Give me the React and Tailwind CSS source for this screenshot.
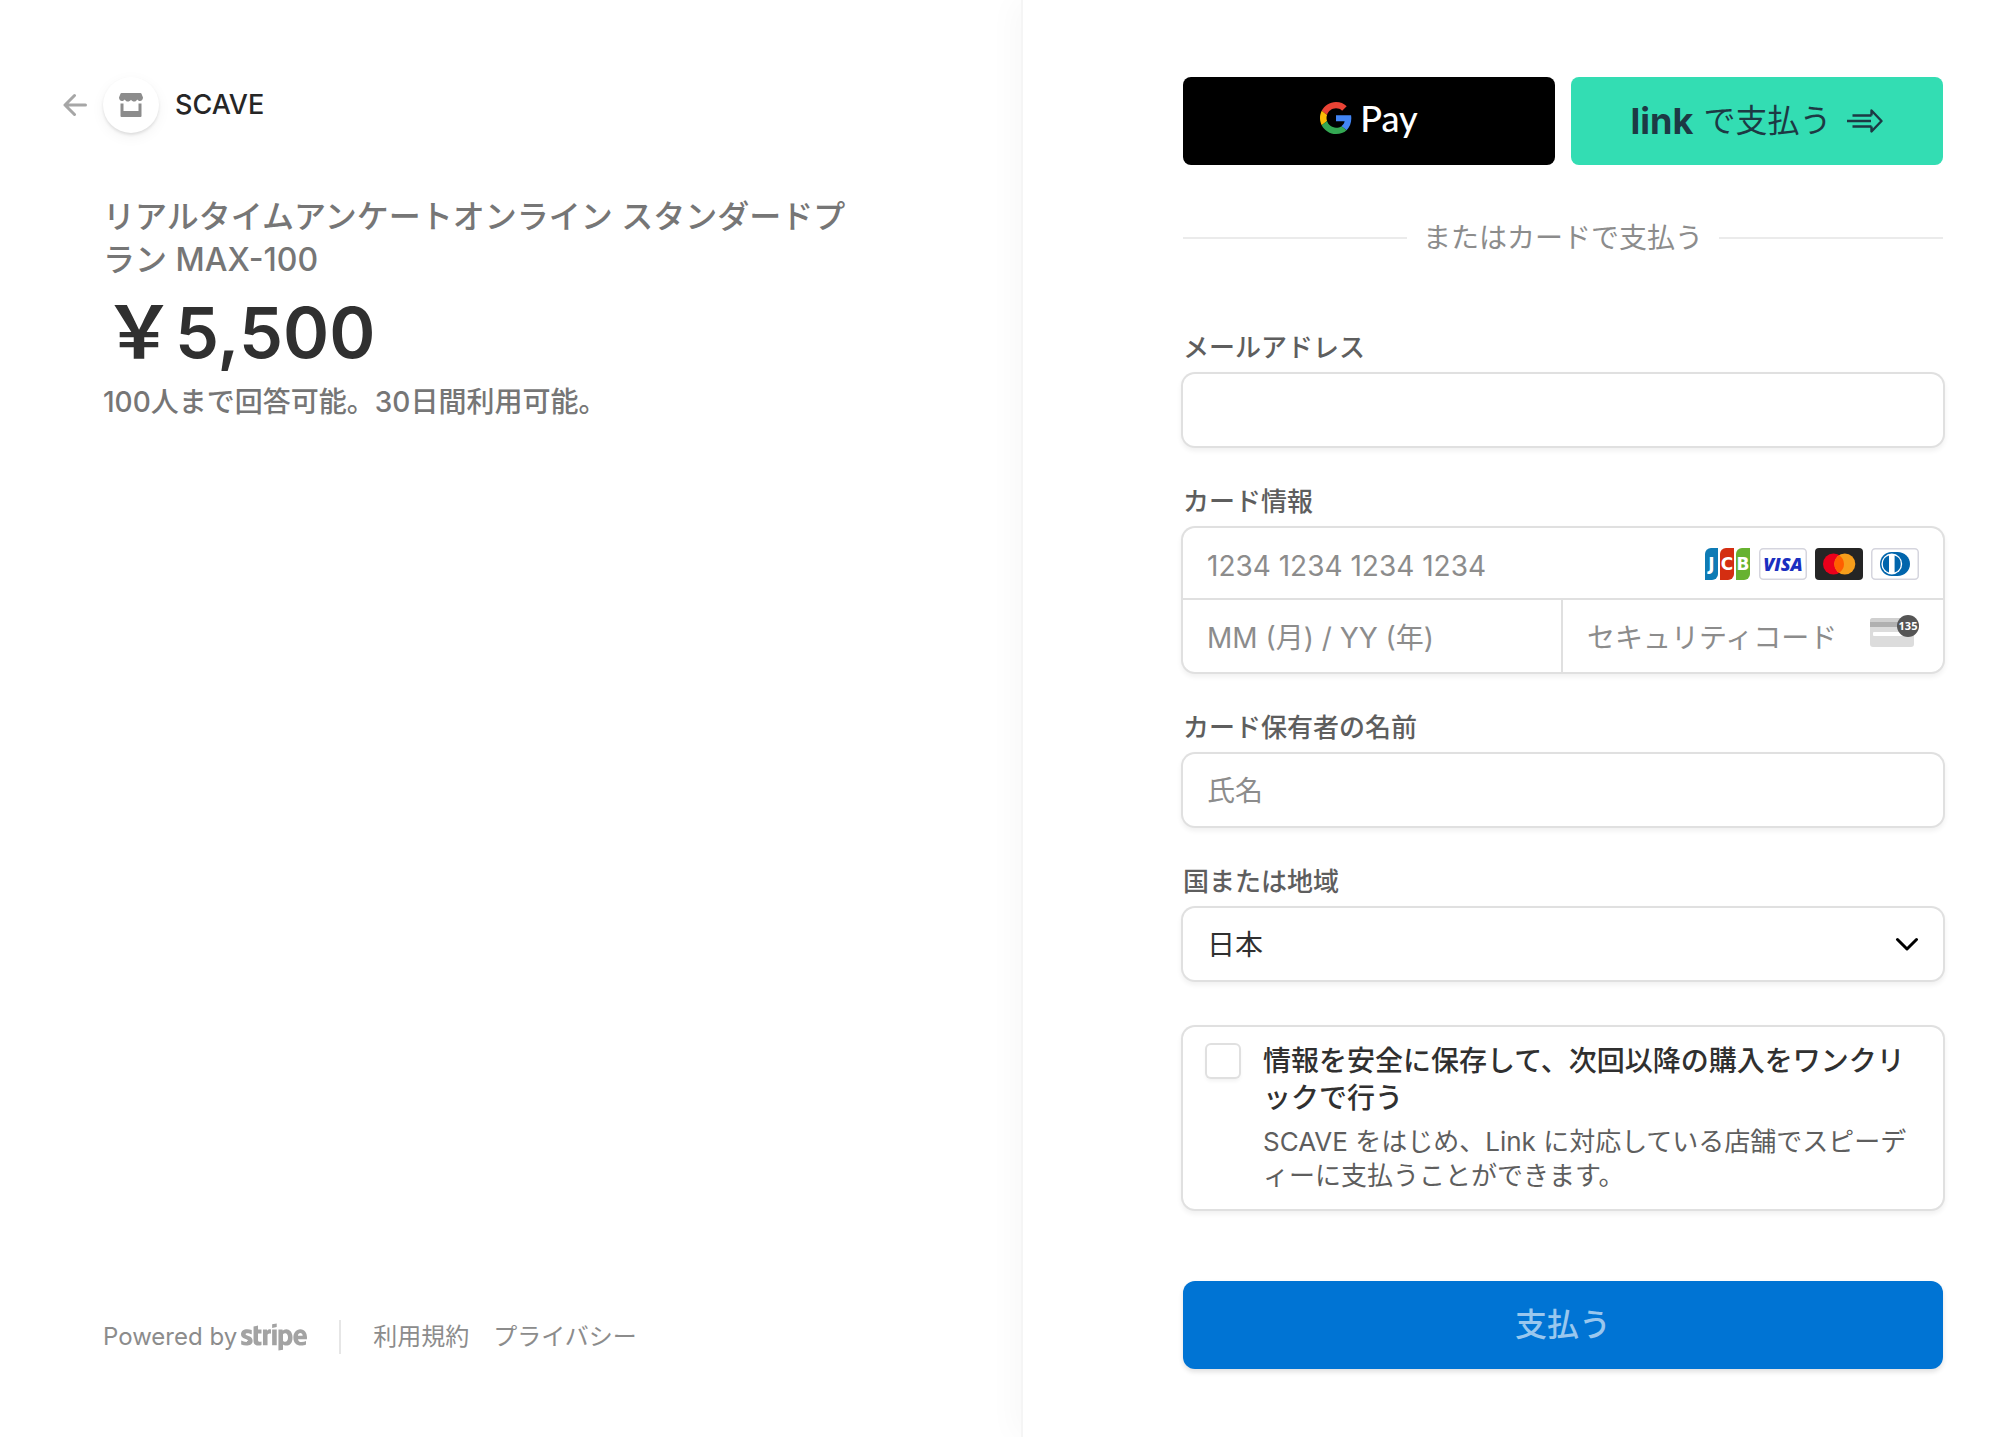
import React from "react";
import { FaStripe } from "react-icons/fa";

const field =
  "block w-full h-18 rounded-xl bg-white px-6 pt-0.5 text-[28px] text-[#303030] placeholder:text-[#8c8c8c] shadow-[0_0_0_2px_#e0e0e0,0_3px_5px_2px_rgba(0,0,0,0.06)] outline-none";

const bareInput =
  "min-w-0 flex-1 self-stretch bg-transparent pt-1 text-[28px] text-[#303030] placeholder:text-[#8c8c8c] outline-none";

function BackArrow() {
  return (
    <svg viewBox="0 0 24 24" className="w-6 h-6" fill="none" stroke="#a6a6a6" strokeWidth="3" strokeLinecap="round" strokeLinejoin="round">
      <path d="M22.5 12H2M11.500 2.500L2 12L11.500 21.500" />
    </svg>
  );
}

function StoreIcon() {
  return (
    <svg viewBox="0 0 24 24" className="w-6 h-6" fill="#8c8c8c">
      <path d="M2.500 0h19a1 1 0 0 1 .9.6L24 4.600c0 1.900-1.300 3.400-3 3.400-1.200 0-2.200-.6-2.800-1.500C17.600 7.700 16.500 8.600 15.200 8.600S12.700 7.800 12 6.700C11.300 7.800 10.100 8.600 8.800 8.600S6.400 7.700 5.800 6.500C5.200 7.400 4.200 8 3 8 1.300 8 0 6.500 0 4.600L1.600.6A1 1 0 0 1 2.500 0Z" />
      <path d="M1.500 10.500h3V18h15v-7.500h3V23a1 1 0 0 1-1 1h-19a1 1 0 0 1-1-1Z" />
    </svg>
  );
}

function GoogleG() {
  return (
    <svg viewBox="0 0 48 48" className="w-8 h-8">
      <path fill="#EA4335" d="M24 9.5c3.540 0 6.710 1.220 9.210 3.600l6.850-6.850C35.900 2.380 30.470 0 24 0 14.620 0 6.510 5.380 2.560 13.220l7.980 6.190C12.430 13.720 17.740 9.500 24 9.500z" />
      <path fill="#4285F4" d="M46.980 24.550c0-1.570-.15-3.090-.38-4.550H24v9.020h12.940c-.58 2.960-2.260 5.480-4.780 7.180l7.730 6c4.510-4.180 7.090-10.360 7.090-17.650z" />
      <path fill="#FBBC05" d="M10.530 28.590c-.48-1.450-.76-2.990-.76-4.590s.27-3.140.76-4.590l-7.980-6.190C.92 16.460 0 20.120 0 24c0 3.880.92 7.540 2.560 10.780l7.970-6.190z" />
      <path fill="#34A853" d="M24 48c6.480 0 11.930-2.130 15.890-5.810l-7.730-6c-2.150 1.450-4.920 2.300-8.160 2.300-6.260 0-11.570-4.220-13.470-9.910l-7.980 6.190C6.510 42.620 14.620 48 24 48z" />
    </svg>
  );
}

function LinkArrow() {
  return (
    <svg viewBox="0 0 36 24" className="w-9 h-6" fill="none" stroke="#1d3944" strokeWidth="2.400" strokeLinejoin="round">
      <path d="M5.500 6.500H24.500M0 12H24M5.500 17.500H24.500" />
      <path d="M24.500 6.500V1.500L34.500 12L24.500 22.500V17.500" />
    </svg>
  );
}

function JcbCard() {
  return (
    <svg viewBox="0 0 48 32" className="w-12 h-8">
      <path fill="#0e7bb5" d="M8 0h7v26a6 6 0 0 1-6 6H2V6a6 6 0 0 1 6-6Z" />
      <path fill="#d42e12" d="M23 0h8v26a6 6 0 0 1-6 6h-8V6a6 6 0 0 1 6-6Z" />
      <path fill="#67b230" d="M39 0h8v26a6 6 0 0 1-6 6h-8V6a6 6 0 0 1 6-6Z" />
      <g fill="#fff" className="font-['DejaVu_Sans']" fontWeight="700" fontSize="17" textAnchor="middle">
        <text x="8.500" y="22">J</text>
        <text x="24" y="22">C</text>
        <text x="40" y="22">B</text>
      </g>
    </svg>
  );
}

function VisaCard() {
  return (
    <svg viewBox="0 0 48 32" className="w-12 h-8">
      <rect x=".75" y=".75" width="46.500" height="30.500" rx="3.500" fill="#fff" stroke="#d5d5de" strokeWidth="1.500" />
      <text x="24" y="22.500" fill="#1a2fc0" className="font-['Open_Sans']" fontStyle="italic" fontWeight="800" fontSize="18" textAnchor="middle">
        VISA
      </text>
    </svg>
  );
}

function MastercardCard() {
  return (
    <svg viewBox="0 0 48 32" className="w-12 h-8">
      <rect width="48" height="32" rx="4" fill="#252525" />
      <circle cx="18.500" cy="16" r="10.500" fill="#eb001b" />
      <circle cx="29.800" cy="16" r="10.500" fill="#f79e1b" />
      <path fill="#ff5f00" d="M24.150 7.150a10.500 10.500 0 0 1 0 17.700a10.500 10.500 0 0 1 0-17.700Z" />
    </svg>
  );
}

function DinersCard() {
  return (
    <svg viewBox="0 0 48 32" className="w-12 h-8">
      <rect x=".75" y=".75" width="46.500" height="30.500" rx="3.500" fill="#fff" stroke="#d5d5de" strokeWidth="1.500" />
      <path fill="#0165ac" d="M20.500 4h6C33.500 4 39 9.200 39 16s-5.500 12-12.500 12h-6C14 28 9 22.800 9 16S14 4 20.500 4Z" />
      <circle cx="20.800" cy="16" r="10.400" fill="#fff" />
      <path fill="#0165ac" d="M18 7.600v16.800a8.800 8.800 0 0 1 0-16.800ZM23.600 7.600a8.800 8.800 0 0 1 0 16.800Z" />
    </svg>
  );
}

function CvcIcon() {
  return (
    <svg viewBox="0 0 50 42" className="w-[50px] h-[42px]">
      <rect x="1" y="3" width="44" height="29" rx="3" fill="#dcdcdc" />
      <path d="M4 3h38a3 3 0 0 1 3 3v6H1V6a3 3 0 0 1 3-3Z" fill="#d0d0d0" />
      <rect x="1" y="7" width="44" height="5" fill="#b0b0b0" />
      <rect x="4" y="17" width="34" height="4" rx="1" fill="#fff" />
      <circle cx="39" cy="11" r="11" fill="#555" />
      <text x="39" y="15" fill="#fff" className="font-['Noto_Sans']" fontWeight="700" fontSize="11" textAnchor="middle">
        135
      </text>
    </svg>
  );
}

function FormField({ id, label, children }) {
  return (
    <div>
      <label htmlFor={id} className="block mb-2.5 text-[26px] leading-8 font-medium text-[#5e5e5e]">
        {label}
      </label>
      {children}
    </div>
  );
}

function OrderSummary() {
  return (
    <section className="flex justify-end bg-white pl-16 pr-[158px] pt-[77px] pb-[72px]">
      <div className="flex w-full max-w-[760px] flex-col">
        <header className="-ml-10 flex items-center gap-4">
          <a href="#back" aria-label="戻る">
            <BackArrow />
          </a>
          <div className="flex h-14 w-14 items-center justify-center rounded-full bg-white shadow-[0_2px_3px_rgba(0,0,0,0.1),0_4px_14px_rgba(0,0,0,0.05)]">
            <StoreIcon />
          </div>
          <h1 className="text-[27px] font-medium text-[#262626]">SCAVE</h1>
        </header>

        <h2 className="mt-[62px] text-[32px] leading-[43px] font-medium text-[#767676]">
          リアルタイムアンケートオンライン スタンダードプラン MAX-100
        </h2>
        <p className="my-2 text-[70px] leading-[86px] font-semibold text-[#303030]">
          <span className="text-[72px]">￥</span>5,500
        </p>
        <p className="text-[28px] leading-9 font-medium text-[#767676]">
          100人まで回答可能。30日間利用可能。
        </p>

        <footer className="mt-auto flex items-center text-2xl text-[#8c8c8c]">
          <a href="#stripe" className="flex items-center gap-1">
            Powered by
            <FaStripe className="h-14 w-[66px] text-[#a3a3a3]" aria-label="Stripe" />
          </a>
          <div className="mx-8 h-8.5 w-0.5 bg-[#e6e6e6]" />
          <nav className="flex gap-6">
            <a href="#terms">利用規約</a>
            <a href="#privacy">プライバシー</a>
          </nav>
        </footer>
      </div>
    </section>
  );
}

function PaymentForm() {
  return (
    <section className="border-l-2 border-[#f5f5f5] bg-white pl-40 pr-16 pt-[77px] pb-[68px] shadow-[-6px_0_30px_rgba(0,0,0,0.03)]">
      <form className="w-full max-w-[760px]" onSubmit={(e) => e.preventDefault()}>
        <div className="grid grid-cols-2 gap-4">
          <button type="button" className="flex h-22 items-center justify-center gap-2 rounded-lg bg-black pb-1.5 text-white">
            <GoogleG />
            <span className="font-['Lato'] text-4xl leading-none font-medium">Pay</span>
          </button>
          <button type="button" className="flex h-22 items-center justify-center rounded-lg bg-[#33ddb3] text-[#1d3944]">
            <span className="text-4xl font-bold">link</span>
            <span className="ml-2.5 mr-4 text-[32px]">で支払う</span>
            <LinkArrow />
          </button>
        </div>

        <div className="mt-[53px] flex items-center gap-4 text-[28px] leading-10 text-[#8c8c8c]">
          <div className="h-0.5 flex-1 bg-[#ebebeb]" />
          またはカードで支払う
          <div className="h-0.5 flex-1 bg-[#ebebeb]" />
        </div>

        <div className="mt-[74px] flex flex-col gap-10">
          <FormField id="email" label="メールアドレス">
            <input id="email" type="email" className={field} />
          </FormField>

          <FormField id="card-number" label="カード情報">
            <div className="rounded-xl shadow-[0_0_0_2px_#e0e0e0,0_3px_5px_2px_rgba(0,0,0,0.06)]">
              <div className="flex h-18 items-center gap-2 border-b-2 border-[#e0e0e0] px-6 pt-0.5">
                <input id="card-number" className={bareInput} placeholder="1234 1234 1234 1234" />
                <JcbCard />
                <VisaCard />
                <MastercardCard />
                <DinersCard />
              </div>
              <div className="grid h-18 grid-cols-2">
                <div className="flex items-center border-r-2 border-[#e0e0e0] px-6">
                  <input aria-label="有効期限" className={bareInput} placeholder="MM (月) / YY (年)" />
                </div>
                <div className="flex items-center px-6">
                  <input aria-label="セキュリティコード" className={bareInput} placeholder="セキュリティコード" />
                  <CvcIcon />
                </div>
              </div>
            </div>
          </FormField>

          <FormField id="name" label="カード保有者の名前">
            <input id="name" className={field} placeholder="氏名" />
          </FormField>

          <FormField id="country" label="国または地域">
            <div className="relative">
              <select id="country" className={`${field} appearance-none`} defaultValue="JP">
                <option value="JP">日本</option>
              </select>
              <svg
                viewBox="0 0 24 14"
                className="pointer-events-none absolute top-1/2 right-6 w-6 -translate-y-1/2"
                fill="none"
                stroke="#000"
                strokeWidth="3"
                strokeLinecap="round"
                strokeLinejoin="round"
              >
                <path d="M2.500 2.500L12 12L21.500 2.500" />
              </svg>
            </div>
          </FormField>
        </div>

        <div className="mt-[47px] flex gap-6 rounded-xl py-4 pl-6 pr-4 shadow-[0_0_0_2px_#e0e0e0,0_3px_5px_2px_rgba(0,0,0,0.06)]">
          <input
            id="save-info"
            type="checkbox"
            className="mt-0.5 h-8 w-8 shrink-0 appearance-none rounded-sm bg-white shadow-[0_0_0_2px_#e0e0e0,0_3px_4px_1px_rgba(0,0,0,0.06)]"
          />
          <div className="min-w-0">
            <label htmlFor="save-info" className="block text-[28px] leading-[37px] font-medium text-[#303030]">
              情報を安全に保存して、次回以降の購入をワンクリックで行う
            </label>
            <p className="mt-2 text-[26px] leading-[34px] text-[#5e5e5e]">
              SCAVE をはじめ、Link に対応している店舗でスピーディーに支払うことができます。
            </p>
          </div>
        </div>

        <button
          type="submit"
          className="mt-18 h-22 w-full rounded-xl bg-[#0074d4] text-[32px] font-medium text-[#99c7ee] shadow-[0_3px_5px_rgba(0,0,0,0.12)]"
        >
          支払う
        </button>
      </form>
    </section>
  );
}

export default function App() {
  return (
    <main
      lang="ja"
      className="grid min-h-screen grid-cols-[1021fr_995fr] bg-white font-['Inter','Noto_Sans_CJK_JP',sans-serif]"
    >
      <OrderSummary />
      <PaymentForm />
    </main>
  );
}
